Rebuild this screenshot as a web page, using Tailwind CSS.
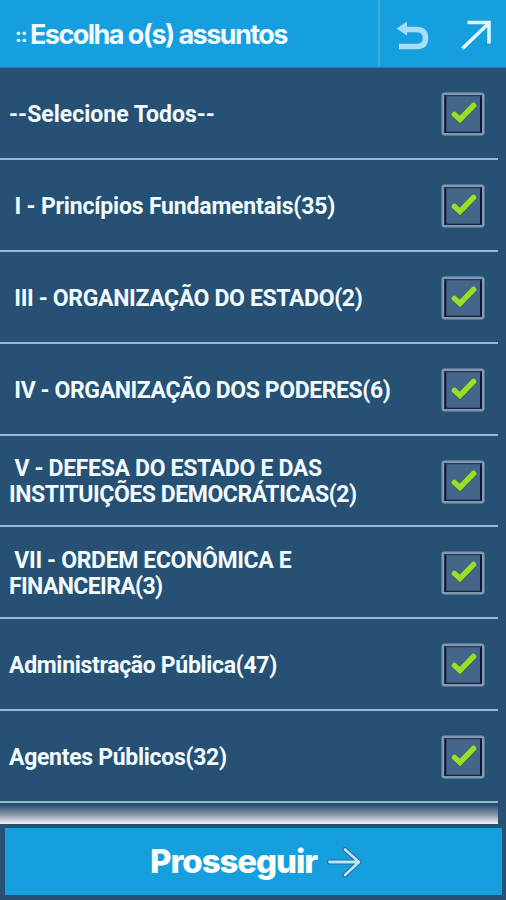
<!DOCTYPE html>
<html lang="pt-BR">
<head>
<meta charset="utf-8">
<title>Escolha o(s) assuntos</title>
<script src="https://cdn.jsdelivr.net/npm/@tailwindcss/browser@4"></script>
</head>
<body class="w-[506px] h-[900px] overflow-hidden bg-[#265174] font-['Roboto',sans-serif] text-[#f2fbff] flex flex-col">
<svg class="hidden">
  <defs>
    <symbol id="box" viewBox="0 0 44 44">
      <rect x="0.500" y="0.500" width="43" height="43" rx="3" fill="#8298b2"/>
      <rect x="3" y="3" width="38" height="38" fill="#3d5876"/>
      <rect x="3.500" y="3" width="2" height="38" fill="#0b1733"/>
      <rect x="39" y="3" width="2" height="38" fill="#0b1733"/>
      <rect x="3.500" y="3" width="37" height="1.500" fill="#273c58"/>
      <rect x="3.500" y="39.500" width="37" height="1.500" fill="#16243f"/>
      <rect x="5.500" y="4.500" width="33.500" height="35" fill="#46658a"/>
      <path d="M13.500 22.500 L19 27.500 L32.500 13.500" fill="none" stroke="#3a6152" stroke-width="7"/>
      <path d="M13.500 22.500 L19 27.500 L32.500 13.500" fill="none" stroke="#96df2b" stroke-width="5.500" stroke-linecap="round"/>
    </symbol>
  </defs>
</svg>
<header class="h-[68px] shrink-0 bg-[#169fdf] border-b border-[#2580b4] flex">
  <h1 class="w-[378px] h-full pt-[2px] pl-[15px] flex items-center font-['Inter',sans-serif] font-bold text-[27px] leading-none whitespace-pre"><span class="w-[15px] text-[20px] font-bold tracking-[-1px]">::</span><span class="tracking-[-1.55px]">Escolha o(s) assuntos</span></h1>
  <div class="w-[2px] h-full bg-[#38aee5]"></div>
  <svg class="w-[126px] h-[67px]" viewBox="380 0 126 67" fill="none">
    <path d="M399 46.500 H417 C423 46.500 425.500 43.500 425.500 38 C425.500 32 422 29.500 416 29.500 H405" stroke="#a6dcf8" stroke-width="5.500"/>
    <path d="M396.500 28.500 L407 21.500 V35.500 Z" fill="#a6dcf8"/>
    <path d="M462.500 48.500 L489 23 M467.500 22.500 H489 V43.500" stroke="#e4f8ff" stroke-width="3.500"/>
  </svg>
</header>
<main class="w-[498px] flex-1 text-[23px] font-bold leading-[26px]">
  <ul>
    <li class="h-[92px] pt-[4px] pl-[9px] pr-[13px] border-b-2 border-[#9cb9d3] flex items-center justify-between"><span>--Selecione Todos--</span><svg class="size-[44px] -mt-[2px]"><use href="#box"/></svg></li>
    <li class="h-[92px] pt-[4px] pl-[9px] pr-[13px] border-b-2 border-[#9cb9d3] flex items-center justify-between"><span class="whitespace-pre tracking-[-0.19px]"> I - Princípios Fundamentais(35)</span><svg class="size-[44px] -mt-[2px]"><use href="#box"/></svg></li>
    <li class="h-[92px] pt-[4px] pl-[9px] pr-[13px] border-b-2 border-[#9cb9d3] flex items-center justify-between"><span class="whitespace-pre tracking-[-0.36px]"> III - ORGANIZAÇÃO DO ESTADO(2)</span><svg class="size-[44px] -mt-[2px]"><use href="#box"/></svg></li>
    <li class="h-[92px] pt-[4px] pl-[9px] pr-[13px] border-b-2 border-[#9cb9d3] flex items-center justify-between"><span class="whitespace-pre tracking-[-0.4px]"> IV - ORGANIZAÇÃO DOS PODERES(6)</span><svg class="size-[44px] -mt-[2px]"><use href="#box"/></svg></li>
    <li class="h-[91px] pt-[3px] pl-[9px] pr-[13px] border-b-2 border-[#9cb9d3] flex items-center justify-between"><span class="whitespace-pre tracking-[-0.33px]"> V - DEFESA DO ESTADO E DAS<br><span class="tracking-[-0.45px]">INSTITUIÇÕES DEMOCRÁTICAS(2)</span></span><svg class="size-[44px] -mt-[1px]"><use href="#box"/></svg></li>
    <li class="h-[92px] pt-[4px] pl-[9px] pr-[13px] border-b-2 border-[#9cb9d3] flex items-center justify-between"><span class="whitespace-pre tracking-[-0.36px]"> VII - ORDEM ECONÔMICA E<br><span class="tracking-[-0.63px]">FINANCEIRA(3)</span></span><svg class="size-[44px] -mt-[2px]"><use href="#box"/></svg></li>
    <li class="h-[92px] pt-[4px] pl-[9px] pr-[13px] border-b-2 border-[#9cb9d3] flex items-center justify-between"><span class="tracking-[-0.32px]">Administração Pública(47)</span><svg class="size-[44px] -mt-[2px]"><use href="#box"/></svg></li>
    <li class="h-[92px] pt-[4px] pl-[9px] pr-[13px] border-b-2 border-[#9cb9d3] flex items-center justify-between"><span class="tracking-[-0.3px]">Agentes Públicos(32)</span><svg class="size-[44px] -mt-[2px]"><use href="#box"/></svg></li>
  </ul>
  <div class="mt-[2px] h-[19px] bg-linear-to-b from-[#285176] via-[#8795a8] to-[#f4f4f4]"></div>
</main>
<footer class="h-[76px] shrink-0 pl-[5px] pr-[4px] pt-[4px] pb-[5px]">
  <button class="w-full h-full pl-[5px] bg-[#169fdf] flex items-center justify-center gap-[9px] font-['Inter',sans-serif] font-extrabold text-[33px] leading-none text-white">
    <span class="tracking-[-1.1px]">Prosseguir</span>
    <svg class="w-[36px] h-[34px]" viewBox="0 0 36 34" fill="none" stroke-linecap="round" stroke-linejoin="round">
      <path d="M3.500 17 H33 M19 4.500 L33 17 L19 30" stroke="#266b99" stroke-width="5"/>
      <path d="M3.500 17 H33 M19 4.500 L33 17 L19 30" stroke="#b5e6fa" stroke-width="2.800"/>
    </svg>
  </button>
</footer>
</body>
</html>
